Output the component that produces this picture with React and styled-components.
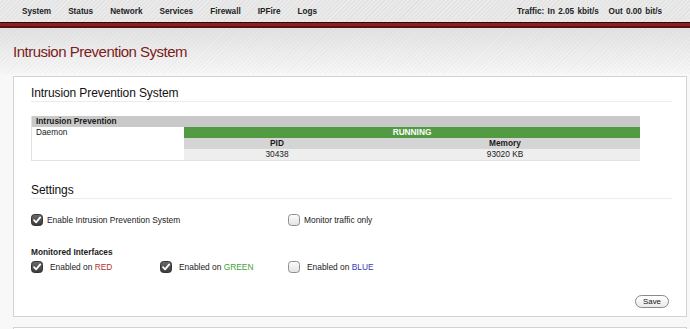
import React from 'react'
import styled, { createGlobalStyle } from 'styled-components'

const Global = createGlobalStyle`
  body {
    margin: 0;
    background: #f8f8f8;
    font-family: "Liberation Sans", Arial, Helvetica, sans-serif;
    color: #1a1a1a;
    overflow: hidden;
  }
`

const stripes = (a, b) => `repeating-linear-gradient(135deg, ${a} 0px, ${a} 1.5px, ${b} 1.5px, ${b} 3px)`

const Nav = styled.div`
  height: 22px;
  display: flex;
  align-items: center;
  padding: 0 28px 0 22px;
  background: ${stripes('#ebebeb', '#e3e3e3')};
`

const NavItem = styled.span`
  font-size: 8.2px;
  font-weight: bold;
  color: #222;
  margin-right: 17px;
`

const Traffic = styled.span`
  margin-left: auto;
  font-size: 8.2px;
  font-weight: bold;
  color: #222;
  word-spacing: 1px;
  white-space: pre;
`

const RedBand = styled.div`
  height: 3px;
  background: #8e1f1f;
  border-top: 1px solid #2e0909;
  border-bottom: 2px solid #561313;
`

const Header = styled.div`
  height: 46px;
  box-sizing: border-box;
  padding: 15px 0 0 13px;
  background: ${stripes('rgba(0,0,0,0.025)', 'rgba(0,0,0,0)')},
    linear-gradient(#e3e3e3, #f8f8f8);
`

const Title = styled.h1`
  margin: 0;
  font-size: 15px;
  line-height: 18px;
  font-weight: normal;
  letter-spacing: -0.5px;
  color: #7b1c1c;
`

const Main = styled.div`
  padding: 2px 3px 0 13px;
`

const Box = styled.div`
  background: #fff;
  border: 1px solid #d2d2d2;
  padding: 8px 14px 8px 17px;
  margin-bottom: 10px;
`

const Heading = styled.h2`
  margin: ${p => p.$top || 0}px 0 0;
  font-size: 12px;
  line-height: 16px;
  font-weight: normal;
  letter-spacing: -0.1px;
  color: #111;
  border-bottom: 1px solid #ececec;
`

const Table = styled.div`
  margin-top: 14px;
  width: 608px;
  display: grid;
  grid-template-columns: 152px 186px 1fr;
  grid-auto-rows: 11px;
  font-size: 8.3px;
  line-height: 11px;
  border-left: 1px solid #e2e2e2;
  border-bottom: 1px solid #e2e2e2;
`

const Cell = styled.div`
  padding: 0 4px;
  background: ${p => p.$bg || 'transparent'};
  color: ${p => p.$color || '#1a1a1a'};
  font-weight: ${p => (p.$bold ? 'bold' : 'normal')};
  text-align: ${p => (p.$center ? 'center' : 'left')};
  grid-column: ${p => p.$col || 'auto'};
  grid-row: ${p => p.$row || 'auto'};
`

const Grid = styled.div`
  display: grid;
  grid-template-columns: 129px 128px 1fr;
  align-items: center;
  margin-top: ${p => p.$top}px;
`

const Option = styled.label`
  display: flex;
  align-items: center;
  gap: ${p => p.$gap || 4}px;
  height: 14px;
  font-size: 8.4px;
  grid-column: ${p => (p.$wide ? 'span 2' : 'auto')};
`

const Iface = styled.span`
  color: ${p => p.$color};
`

const SubTitle = styled.div`
  margin-top: 20px;
  font-size: 8.3px;
  line-height: 11px;
  font-weight: bold;
`

const Footer = styled.div`
  display: flex;
  justify-content: flex-end;
  margin-top: 21px;
  padding-right: 3px;
`

const Button = styled.button`
  width: 34px;
  height: 13px;
  padding: 0;
  border: 1px solid #8a8a8a;
  border-radius: 7px;
  background: linear-gradient(#ffffff, #e9e9e9);
  font-family: inherit;
  font-size: 7.8px;
  line-height: 11px;
  color: #111;
`

const NextBox = styled.div`
  height: 20px;
  background: #fff;
  border: 1px solid #d2d2d2;
`

const Check = ({ on }) => (
  <svg width="12" height="12" viewBox="0 0 12 12">
    <defs>
      <linearGradient id={on ? 'cOn' : 'cOff'} x1="0" y1="0" x2="0" y2="1">
        <stop offset="0" stopColor={on ? '#6a6a6a' : '#fdfdfd'} />
        <stop offset="1" stopColor={on ? '#3a3a3a' : '#e2e2e2'} />
      </linearGradient>
    </defs>
    <rect x="0.5" y="0.5" width="11" height="11" rx="3" fill={`url(#${on ? 'cOn' : 'cOff'})`} stroke={on ? '#333' : '#8e8e8e'} />
    {on && <path d="M3 6.2 L5.1 8.4 L9.2 3.4" fill="none" stroke="#fff" strokeWidth="1.7" strokeLinecap="round" strokeLinejoin="round" />}
  </svg>
)

const navItems = ['System', 'Status', 'Network', 'Services', 'Firewall', 'IPFire', 'Logs']

export default function App() {
  return (
    <>
      <Global />
      <Nav>
        {navItems.map(n => <NavItem key={n}>{n}</NavItem>)}
        <Traffic>{'Traffic: In 2.05 kbit/s   Out 0.00 bit/s'}</Traffic>
      </Nav>
      <RedBand />
      <Header>
        <Title>Intrusion Prevention System</Title>
      </Header>
      <Main>
        <Box>
          <Heading>Intrusion Prevention System</Heading>
          <Table>
            <Cell $bg="#c9c9c9" $bold $col="1 / 4">Intrusion Prevention</Cell>
            <Cell $row="2 / 5">Daemon</Cell>
            <Cell $bg="#539b43" $color="#fff" $bold $center $col="2 / 4">RUNNING</Cell>
            <Cell $bg="#d5d5d5" $bold $center>PID</Cell>
            <Cell $bg="#d5d5d5" $bold $center>Memory</Cell>
            <Cell $bg="#eeeeee" $center>30438</Cell>
            <Cell $bg="#eeeeee" $center>93020 KB</Cell>
          </Table>

          <Heading $top={21}>Settings</Heading>
          <Grid $top={14}>
            <Option $wide><Check on /><span>Enable Intrusion Prevention System</span></Option>
            <Option><Check /><span>Monitor traffic only</span></Option>
          </Grid>

          <SubTitle>Monitored Interfaces</SubTitle>
          <Grid $top={2}>
            <Option $gap={7}><Check on /><span>Enabled on <Iface $color="#b23434">RED</Iface></span></Option>
            <Option $gap={7}><Check on /><span>Enabled on <Iface $color="#45a03a">GREEN</Iface></span></Option>
            <Option $gap={7}><Check /><span>Enabled on <Iface $color="#3b3bb8">BLUE</Iface></span></Option>
          </Grid>

          <Footer>
            <Button>Save</Button>
          </Footer>
        </Box>
        <NextBox />
      </Main>
    </>
  )
}
